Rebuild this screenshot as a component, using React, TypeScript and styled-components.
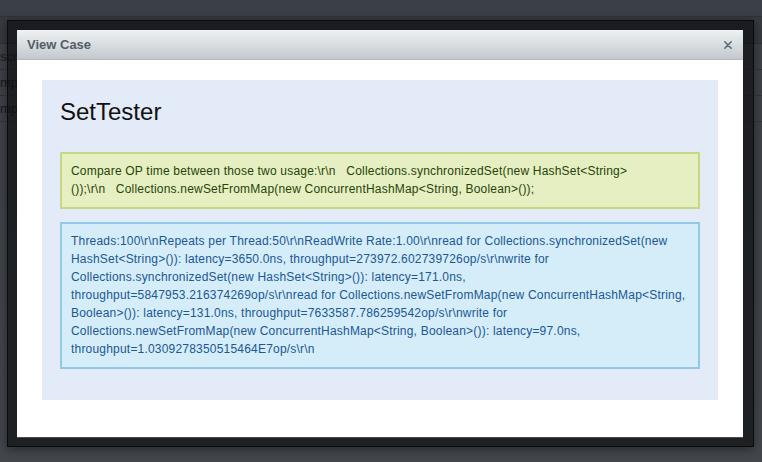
import { FC } from 'react'
import styled, { createGlobalStyle } from 'styled-components'

const GlobalStyle = createGlobalStyle`
   html, body {
      margin: 0;
      padding: 0;
      width: 762px;
      height: 462px;
      overflow: hidden;
      background: #3f434a;
      font-family: 'Liberation Sans', Arial, sans-serif;
   }
`

const goal =
   'Compare OP time between those two usage:\\r\\n   Collections.synchronizedSet(new HashSet<String>\n());\\r\\n   Collections.newSetFromMap(new ConcurrentHashMap<String, Boolean>());'

const result =
   'Threads:100\\r\\nRepeats per Thread:50\\r\\nReadWrite Rate:1.00\\r\\nread for Collections.synchronizedSet(new HashSet<String>()): latency=3650.0ns, throughput=273972.602739726op/s\\r\\nwrite for Collections.synchronizedSet(new HashSet<String>()): latency=171.0ns, throughput=5847953.216374269op/s\\r\\nread for Collections.newSetFromMap(new ConcurrentHashMap<String, Boolean>()): latency=131.0ns, throughput=7633587.786259542op/s\\r\\nwrite for Collections.newSetFromMap(new ConcurrentHashMap<String, Boolean>()): latency=97.0ns, throughput=1.0309278350515464E7op/s\\r\\n'

const rows = ['scription', 'mple', 'mple']

const CloseIcon: FC = () => (
   <svg width="8" height="8" viewBox="0 0 8 8">
      <path d="M0.8 0.8 L7.2 7.2 M7.2 0.8 L0.8 7.2" stroke="#5a6571" strokeWidth="1.5" strokeLinecap="round" />
   </svg>
)

export default function App() {
   return (
      <>
         <GlobalStyle />
         <Page>
            <TopBar />
            <SubBar />
            {rows.map((r, i) => (
               <Row key={i}>{r}</Row>
            ))}
         </Page>

         <Overlay>
            <Frame>
               <Dialog>
                  <Header>
                     <HeaderTitle>View Case</HeaderTitle>
                     <CloseButton>
                        <CloseIcon />
                     </CloseButton>
                  </Header>
                  <Body>
                     <CaseBox>
                        <Title>SetTester</Title>
                        <Message $kind="success">{goal}</Message>
                        <Message $kind="info">{result}</Message>
                     </CaseBox>
                  </Body>
               </Dialog>
            </Frame>
         </Overlay>
      </>
   )
}

const Page = styled.div`
   width: 762px;
   height: 462px;
   background: linear-gradient(#3d4148, #43474d);
`

const TopBar = styled.div`
   height: 16px;
   background: #3b3f48;
   border-bottom: 1px solid #30333a;
`

const SubBar = styled.div`
   height: 26px;
   background: #363a41;
   border-bottom: 1px solid #2e3137;
`

const Row = styled.div`
   height: 25px;
   line-height: 25px;
   font-size: 13px;
   color: #17191c;
   border-bottom: 1px dotted #2b2e33;
   white-space: nowrap;
   overflow: hidden;
`

const Overlay = styled.div`
   position: absolute;
   left: 7px;
   top: 20px;
`

const Frame = styled.div`
   width: 726px;
   padding: 9px 10px 8px 9px;
   background: rgba(14, 15, 17, 0.68);
   border: 1px solid #0b0b0c;
   box-shadow: 0 2px 10px rgba(0, 0, 0, 0.45);
`

const Dialog = styled.div`
   background: #fff;
   border-bottom: 1px solid #4a4c50;
`

const Header = styled.div`
   height: 30px;
   box-sizing: border-box;
   display: flex;
   align-items: center;
   justify-content: space-between;
   padding: 0 11px 0 10px;
   background: linear-gradient(#eef2f3, #c3c9ce);
   border-bottom: 1px solid #b4babf;
`

const HeaderTitle = styled.span`
   font-size: 13px;
   font-weight: bold;
   color: #545d66;
`

const CloseButton = styled.span`
   display: flex;
   align-items: center;
   margin-top: 1px;
`

const Body = styled.div`
   padding: 20px 25px 37px;
`

const CaseBox = styled.div`
   background: #e4ebf8;
   padding: 14px 18px 18px;
`

const Title = styled.h1`
   margin: 0 0 22px;
   font-size: 24px;
   line-height: 36px;
   font-weight: normal;
   color: #111;
`

const Message = styled.div<{ $kind: 'success' | 'info' }>`
   margin-bottom: 13px;
   padding: 8px 9px 9px;
   font-size: 12px;
   line-height: 18px;
   letter-spacing: 0.2px;
   white-space: pre-wrap;
   border: 2px solid ${props => (props.$kind === 'success' ? '#c6d880' : '#92cae4')};
   background: ${props => (props.$kind === 'success' ? '#e6efc2' : '#d5edf8')};
   color: ${props => (props.$kind === 'success' ? '#264409' : '#205791')};
`
